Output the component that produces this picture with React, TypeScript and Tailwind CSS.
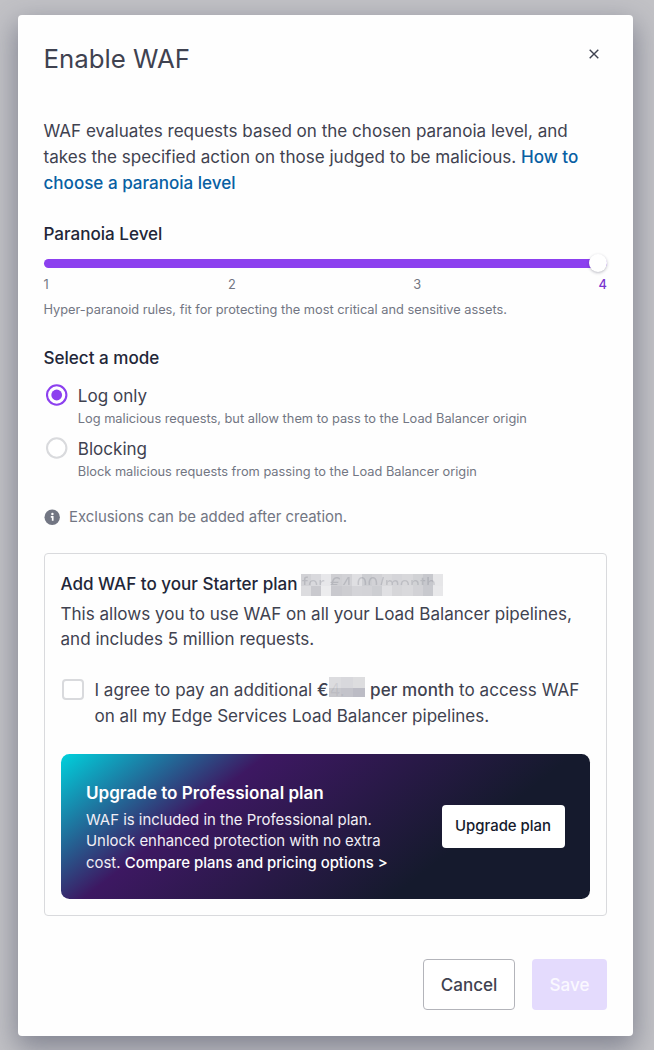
import type { ReactNode } from "react";

const priceCells = [
  "bg-[#d2d2d6]", "bg-[#d9d9dd]", "bg-[#e7e7ea]", "bg-[#cfcfd3]", "bg-[#d2d2d6]", "bg-[#dfdfe2]", "bg-[#cdced2]",
  "bg-[#d2d2d6]", "bg-[#d9d9dc]", "bg-[#d5d5d9]", "bg-[#d8d8db]", "bg-[#d1d2d5]", "bg-[#c7c8cd]", "bg-[#e6e6e8]",
  "bg-[#dcdcdf]", "bg-[#c9c9ce]", "bg-[#ececee]", "bg-[#c9c9ce]", "bg-[#cdcdd1]", "bg-[#d4d4d8]", "bg-[#d3d3d7]",
  "bg-[#cdced2]", "bg-[#e0e0e3]", "bg-[#d6d6d9]", "bg-[#d9d9dc]", "bg-[#d2d2d6]", "bg-[#c8c9ce]", "bg-[#e8e8ea]",
];

const feeCells = [
  "bg-[#dcdcdf]", "bg-[#d8d8dc]", "bg-[#dddddf]",
  "bg-[#c7c7cc]", "bg-[#c3c3ca]", "bg-[#bcbcc5]",
];

function Radio({ checked }: { checked?: boolean }) {
  return (
    <svg width="22" height="22" viewBox="0 0 22 22" className="block shrink-0">
      <circle cx="10.7" cy="11" r="9.7" fill="white" stroke={checked ? "#8c40ef" : "#d9dadd"} strokeWidth="2.1" />
      {checked && <circle cx="10.7" cy="11" r="5.4" fill="#8c40ef" />}
    </svg>
  );
}

function Mode({ checked, label, children }: { checked?: boolean; label: string; children: ReactNode }) {
  return (
    <div className="flex h-[53.3px] gap-[10px] pl-[2.3px]">
      <Radio checked={checked} />
      <div className="-mt-[0.5px]">
        <div className="text-[17.06px] leading-[25.6px]">{label}</div>
        <div className="text-[12.8px] leading-[20px] text-[#727683]">{children}</div>
      </div>
    </div>
  );
}

export default function App() {
  return (
    <div className="h-[1050px] w-[654px] overflow-hidden bg-[#c2c2c6] pt-[15px] pl-[18px] font-[Inter,sans-serif] text-[17.06px] leading-[25.6px] text-[#3f4250]">
      <div className="flex h-[1020.5px] w-[614.5px] flex-col rounded-[4px] bg-[#fefefe] px-[25.5px] pt-[26px] shadow-[0_10px_28px_2px_rgba(70,74,96,0.52)]">
        <header className="flex h-[77px] items-start justify-between">
          <h1 className="mt-px text-[25.8px] leading-[34px] font-normal">Enable WAF</h1>
          <button aria-label="Close" className="mt-[8px] mr-[8px]">
            <svg width="10" height="10" viewBox="0 0 10 10" fill="none" stroke="#3f4250" strokeWidth="1.4" className="block">
              <path d="M.7.7l8.6 8.6M9.3.7L.7 9.3" />
            </svg>
          </button>
        </header>

        <p className="h-[102.5px] pt-[0.4px] whitespace-nowrap">
          WAF evaluates requests based on the chosen paranoia level, and<br />
          takes the specified action on those judged to be malicious. <a className="font-medium text-[#0860a3]">How to</a><br />
          <a className="font-medium text-[#0860a3]">choose a paranoia level</a>
        </p>

        <section className="h-[124.5px] text-[12.8px] leading-[20px] text-[#727683]">
          <h2 className="text-[17.06px] leading-[25.6px] font-medium text-[#222638]">Paranoia Level</h2>
          <div className="mt-[8px] flex h-[18px] items-center">
            <div className="flex h-[9px] w-full items-center justify-end rounded-full bg-[#8c40ef]">
              <div className="h-[18px] w-[18px] rounded-full bg-white shadow-[0_1px_3px_rgba(30,30,60,0.3)]" />
            </div>
          </div>
          <div className="mt-[3px] flex justify-between">
            <span>1</span><span className="pl-[2px]">2</span><span>3</span><span className="font-medium text-[#7936cf]">4</span>
          </div>
          <p className="mt-[5px]">Hyper-paranoid rules, fit for protecting the most critical and sensitive assets.</p>
        </section>

        <section className="h-[161px]">
          <h2 className="mb-[13px] font-medium text-[#222638]">Select a mode</h2>
          <Mode checked label="Log only">Log malicious requests, but allow them to pass to the Load Balancer origin</Mode>
          <Mode label="Blocking">Block malicious requests from passing to the Load Balancer origin</Mode>
        </section>

        <div className="flex h-[46.5px] items-start gap-[8.5px] text-[14.93px] leading-[22px] text-[#727683]">
          <svg width="17" height="17" viewBox="0 0 17 17" className="mt-[3px]">
            <circle cx="8.2" cy="8.3" r="7.7" fill="#727683" />
            <circle cx="8.4" cy="5" r="1.2" fill="white" />
            <path d="M6.8 7.9h1.9v3.8" fill="none" stroke="white" strokeWidth="1.7" />
          </svg>
          Exclusions can be added after creation.
        </div>

        <section className="h-[363px] w-[563.5px] shrink-0 rounded-[4px] border border-[#d9dadd] px-[16px] pt-[17px] whitespace-nowrap">
          <h3 className="flex h-[30px] font-medium text-[#222638]">
            Add WAF to your Starter plan
            <span className="relative mt-[3px] ml-[3.5px] grid h-[22px] w-[142px] grid-cols-14 grid-rows-[12px_10px]">
              {priceCells.map((c, i) => <i key={i} className={c} />)}
              <span className="absolute -top-[2.5px] left-[1px] bg-[linear-gradient(#55596733_14.5px,transparent_14.5px)] bg-clip-text font-normal tracking-[0.15px] text-transparent">for €4.00/month</span>
            </span>
          </h3>
          <p>This allows you to use WAF on all your Load Balancer pipelines,<br />and includes 5 million requests.</p>
          <div className="mt-[25.5px] flex h-[76.5px] gap-[11px] pl-[1.5px]">
            <div className="mt-[1.5px] h-[21.5px] w-[21.5px] shrink-0 rounded-[4px] border-2 border-[#d9dadd] bg-white" />
            <div>
              <div className="flex">
                <span className="whitespace-pre">I agree to pay an additional </span>
                <span className="font-medium">€</span>
                <span className="relative ml-[1px] grid h-[20px] w-[36px] grid-cols-3 grid-rows-[11px_9px]">
                  {feeCells.map((c, i) => <i key={i} className={c} />)}
                  <span className="absolute left-0 top-0 font-normal text-[#555967]/10">4.</span>
                </span>
                <span className="whitespace-pre font-medium tracking-[0.08px]"> per month</span>
                <span className="whitespace-pre tracking-[0.04px]"> to access WAF</span>
              </div>
              <div>on all my Edge Services Load Balancer pipelines.</div>
            </div>
          </div>
          <div className="flex h-[145px] items-center justify-between rounded-[8.5px] bg-[linear-gradient(142deg,#00d1dc_0%,#3d1862_29%,#151a2d_72%)] px-[25.5px] text-white">
            <div className="pt-[2px]">
              <h4 className="mb-[4px] font-semibold">Upgrade to Professional plan</h4>
              <p className="text-[14.93px] leading-[21.3px] text-[#f1eef5]">
                WAF is included in the Professional plan.<br />Unlock enhanced protection with no extra<br />cost. <a className="font-medium text-white">Compare plans and pricing options &gt;</a>
              </p>
            </div>
            <button className="h-[43px] w-[123px] rounded-[4px] bg-white pt-px text-[14.93px] font-medium text-[#151a2d]">Upgrade plan</button>
          </div>
        </section>

        <footer className="mt-[43px] flex justify-end gap-[17px]">
          <button className="h-[51px] w-[92px] rounded-[4px] border border-[#b3b4ba] bg-white pt-px font-medium">Cancel</button>
          <button className="h-[51px] w-[75px] rounded-[4px] bg-[#e4dbfd] pt-px font-medium text-[#faf8ff]">Save</button>
        </footer>
      </div>
    </div>
  );
}
